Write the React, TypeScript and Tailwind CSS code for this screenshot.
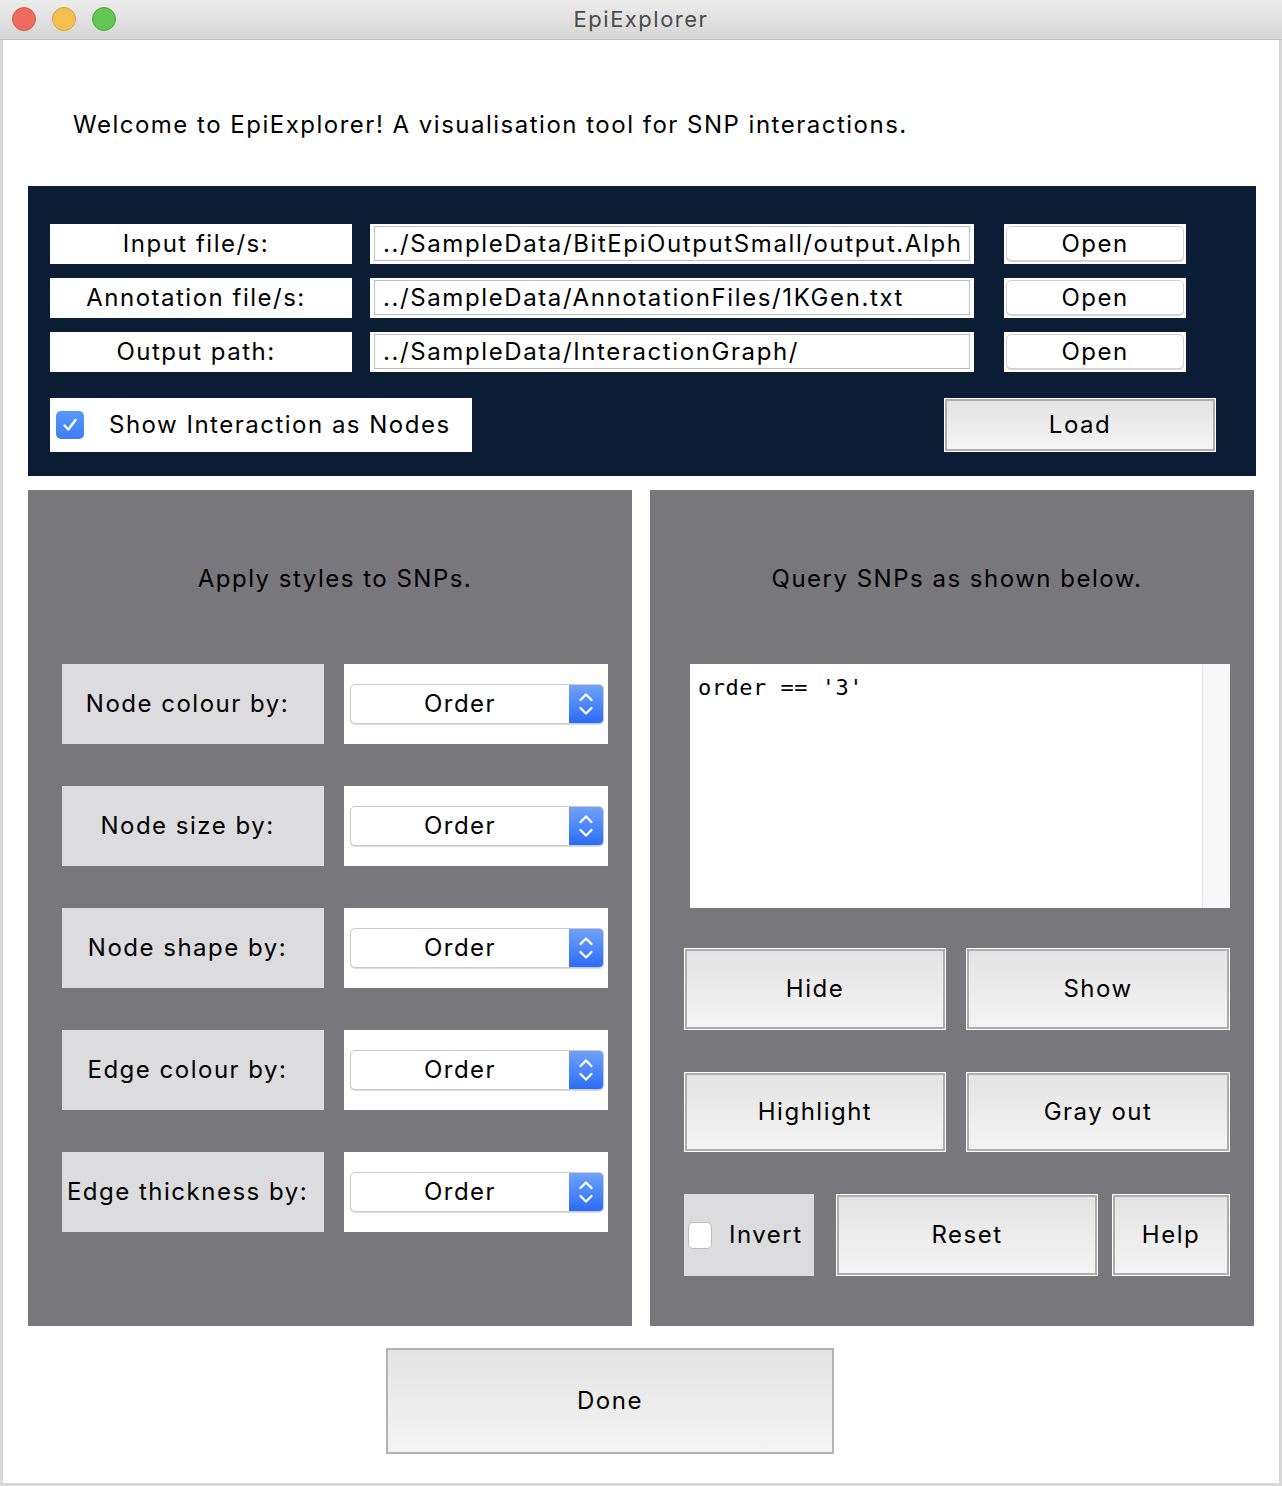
import React from "react";

const SANS = "font-['Inter','Helvetica_Neue',sans-serif] tracking-[1.5px]";

function GrayButton({ label, className }: { label: string; className: string }) {
  return (
    <div className={`border border-white ${className}`}>
      <div className="flex h-full w-full items-center justify-center border-2 border-[#adadad] bg-linear-to-b from-[#e4e4e4] to-[#f4f4f4] text-[24px] text-black">
        {label}
      </div>
    </div>
  );
}

function OpenButton() {
  return (
    <div className="flex h-[40px] w-[182px] items-center bg-white px-[2px] pt-[2px] pb-[3px]">
      <div className="flex h-full w-full items-center justify-center rounded-[5px] border border-[#d0d0d0] bg-white text-[24px] text-black shadow-[0_1px_1px_rgba(0,0,0,0.18)]">
        Open
      </div>
    </div>
  );
}

function PathField({ value }: { value: string }) {
  return (
    <div className="h-[40px] w-[604px] bg-white pt-[2px] pb-[3px] pr-[4px] pl-[4px]">
      <div className="flex h-full w-full items-center overflow-hidden whitespace-nowrap border border-[#bdbdbd] pl-[8px] text-[24px] tracking-[1.6px] text-black">
        {value}
      </div>
    </div>
  );
}

function Chevrons() {
  return (
    <svg width="18" height="30" viewBox="0 0 18 30" fill="none">
      <path d="M3.5 11 L9 5.5 L14.5 11" stroke="white" strokeWidth="2.2" strokeLinecap="round" strokeLinejoin="round" />
      <path d="M3.5 19 L9 24.5 L14.5 19" stroke="white" strokeWidth="2.2" strokeLinecap="round" strokeLinejoin="round" />
    </svg>
  );
}

function Dropdown() {
  return (
    <div className="flex h-[80px] w-[264px] items-center bg-white pl-[6px] pr-[4px]">
      <div className="flex h-[40px] w-full overflow-hidden rounded-[5px] border border-[#cacaca] bg-white shadow-[0_1px_1px_rgba(0,0,0,0.15)]">
        <div className="flex flex-1 items-center justify-center text-[24px] text-black">Order</div>
        <div className="flex w-[34px] items-center justify-center bg-linear-to-b from-[#71a2f8] to-[#2b6bf6]">
          <Chevrons />
        </div>
      </div>
    </div>
  );
}

function StyleRow({ label }: { label: string }) {
  return (
    <div className="flex gap-[20px]">
      <div className="flex h-[80px] w-[262px] items-center justify-center whitespace-nowrap bg-[#dcdcde] pr-[11px] text-[24px] text-black">
        {label}
      </div>
      <Dropdown />
    </div>
  );
}

export default function App() {
  return (
    <div className={`flex h-[1486px] w-[1282px] flex-col bg-[#d8d8d8] ${SANS}`}>
      {/* Title bar */}
      <div className="relative flex h-[40px] w-full shrink-0 items-center border-b border-[#c2c2c2] bg-linear-to-b from-[#ececec] to-[#d6d6d6]">
        <div className="mb-[2px] ml-[12px] flex items-center gap-[16px]">
          <div className="h-[24px] w-[24px] rounded-full border border-[#d8584e] bg-[#ee6b60]" />
          <div className="h-[24px] w-[24px] rounded-full border border-[#d9a13a] bg-[#f6c04f]" />
          <div className="h-[24px] w-[24px] rounded-full border border-[#4fa73f] bg-[#62c655]" />
        </div>
        <div className="absolute inset-0 flex items-center justify-center pb-[1px] text-[22px] text-[#4b4b4b]">EpiExplorer</div>
      </div>

      {/* Content */}
      <div className="mx-[3px] mb-[3px] flex flex-1 flex-col bg-white">
        <div className="mt-[69px] ml-[70px] h-[32px] text-[24px] leading-[32px] text-black">
          Welcome to EpiExplorer! A visualisation tool for SNP interactions.
        </div>

        {/* Dark panel */}
        <div className="mt-[45px] ml-[25px] flex h-[290px] w-[1228px] flex-col bg-[#0a1d35] pt-[38px] pl-[22px]">
          <div className="flex flex-col gap-[14px]">
            {[
              ["Input file/s:", "../SampleData/BitEpiOutputSmall/output.Alph"],
              ["Annotation file/s:", "../SampleData/AnnotationFiles/1KGen.txt"],
              ["Output path:", "../SampleData/InteractionGraph/"],
            ].map(([label, value]) => (
              <div key={label} className="flex items-center">
                <div className="flex h-[40px] w-[302px] items-center justify-center bg-white pr-[10px] text-[24px] text-black">{label}</div>
                <div className="ml-[18px]">
                  <PathField value={value} />
                </div>
                <div className="ml-[30px]">
                  <OpenButton />
                </div>
              </div>
            ))}
          </div>
          <div className="mt-[26px] flex items-center">
            <div className="flex h-[54px] w-[422px] items-center bg-white pl-[6px]">
              <div className="flex h-[28px] w-[28px] items-center justify-center rounded-[5px] bg-linear-to-b from-[#5a97f7] to-[#3b7ef3]">
                <svg width="18" height="18" viewBox="0 0 18 18" fill="none">
                  <path d="M3.5 9.5 L7.3 13.5 L14.5 4" stroke="white" strokeWidth="2.4" strokeLinecap="round" strokeLinejoin="round" />
                </svg>
              </div>
              <div className="ml-[25px] text-[24px] text-black">Show Interaction as Nodes</div>
            </div>
            <GrayButton label="Load" className="ml-[472px] h-[54px] w-[272px]" />
          </div>
        </div>

        {/* Gray panels */}
        <div className="mt-[14px] ml-[25px] flex gap-[18px]">
          {/* Left */}
          <div className="flex h-[836px] w-[604px] flex-col bg-[#78777c] pl-[34px] pr-[24px]">
            <div className="mt-[73px] h-[32px] text-center text-[24px] leading-[32px] text-black">Apply styles to SNPs.</div>
            <div className="mt-[69px] flex flex-col gap-[42px]">
              <StyleRow label="Node colour by:" />
              <StyleRow label="Node size by:" />
              <StyleRow label="Node shape by:" />
              <StyleRow label="Edge colour by:" />
              <StyleRow label="Edge thickness by:" />
            </div>
          </div>

          {/* Right */}
          <div className="flex h-[836px] w-[604px] flex-col bg-[#78777c] pl-[34px] pr-[24px]">
            <div className="mt-[73px] h-[32px] text-center text-[24px] leading-[32px] text-black">Query SNPs as shown below.</div>
            <div className="mt-[69px] ml-[6px] flex h-[244px] w-[540px] bg-white">
              <div className="flex-1 pt-[10px] pl-[8px] font-['DejaVu_Sans_Mono',monospace] text-[22px] leading-[28px] tracking-[0.5px] text-black">
                order == '3'
              </div>
              <div className="w-[28px] border-l border-[#e3e3e3] bg-[#f8f8f8]" />
            </div>
            <div className="mt-[40px] flex gap-[20px]">
              <GrayButton label="Hide" className="h-[82px] w-[262px]" />
              <GrayButton label="Show" className="h-[82px] w-[264px]" />
            </div>
            <div className="mt-[42px] flex gap-[20px]">
              <GrayButton label="Highlight" className="h-[80px] w-[262px]" />
              <GrayButton label="Gray out" className="h-[80px] w-[264px]" />
            </div>
            <div className="mt-[42px] flex">
              <div className="flex h-[82px] w-[130px] items-center bg-[#dcdcde] pl-[4px]">
                <div className="h-[27px] w-[24px] rounded-[5px] border border-[#bdbdbd] bg-white" />
                <div className="ml-[17px] text-[24px] text-black">Invert</div>
              </div>
              <GrayButton label="Reset" className="ml-[22px] h-[82px] w-[262px]" />
              <GrayButton label="Help" className="ml-[14px] h-[82px] w-[118px]" />
            </div>
          </div>
        </div>

        {/* Done */}
        <div className="mt-[22px] ml-[383px] flex h-[106px] w-[448px] items-center justify-center border-2 border-[#b3b3b3] bg-linear-to-b from-[#e4e4e4] to-[#f4f4f4] text-[24px] text-black">
          Done
        </div>
      </div>
    </div>
  );
}
